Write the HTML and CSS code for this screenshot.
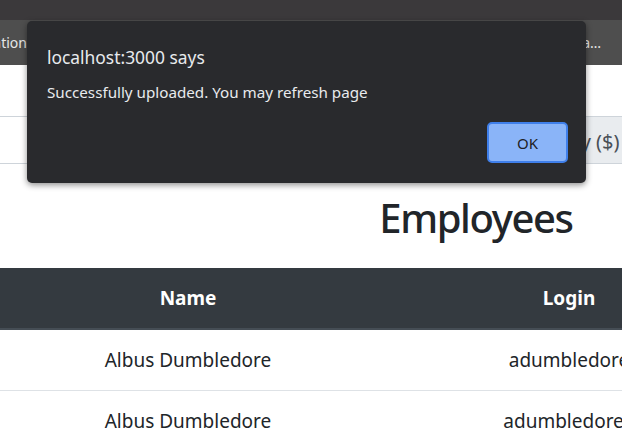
FILE: index.html
```html
<!DOCTYPE html>
<html lang="en">
<head>
<meta charset="utf-8">
<title>Employees</title>
<link rel="stylesheet" href="styles.css">
</head>
<body>
<div class="topband"></div>
<nav class="navbar">
  <div class="brand"><span>Employee Salary Application</span></div>
  <div class="spacer"></div>
  <div class="nav-link">Upload Data File</div>
</nav>
<main class="page">
  <div class="filters">
    <div class="field">
      <input class="form-control" type="text">
      <span class="group-text">Min Salary ($)</span>
    </div>
  </div>
  <h1 class="title">Employees</h1>
  <table class="table">
    <colgroup>
      <col class="c-name">
      <col class="c-login">
      <col class="c-salary">
    </colgroup>
    <thead>
      <tr><th>Name</th><th>Login</th><th>Salary</th></tr>
    </thead>
    <tbody>
      <tr><td>Albus Dumbledore</td><td>adumbledore</td><td>1000.00</td></tr>
      <tr><td>Albus Dumbledore</td><td>adumbledore2</td><td>1000.00</td></tr>
    </tbody>
  </table>
</main>

<div class="dialog" role="alertdialog">
  <div class="dialog-title">localhost:3000 says</div>
  <div class="dialog-msg">Successfully uploaded. You may refresh page</div>
  <div class="dialog-actions">
    <button class="ok-btn" type="button">OK</button>
  </div>
</div>
</body>
</html>
```

FILE: styles.css
```css
html, body {
  margin: 0;
  padding: 0;
}
body {
  width: 622px;
  height: 431px;
  overflow: hidden;
  position: relative;
  background: #ffffff;
  font-family: "Noto Sans", "Open Sans", sans-serif;
  color: #212529;
}
.topband {
  height: 20px;
  background: #3b393b;
}
.navbar {
  height: 45px;
  background: #4e4e4e;
  display: flex;
  align-items: center;
  color: #e6e6e6;
  font-size: 14px;
}
.brand {
  width: 27px;
  overflow: hidden;
  display: flex;
  justify-content: flex-end;
}
.brand span {
  white-space: nowrap;
  flex-shrink: 0;
}
.spacer { flex: 1; }
.nav-link {
  width: 84px;
  margin-right: 17px;
  white-space: nowrap;
  overflow: hidden;
  text-overflow: ellipsis;
}
.page {
  width: 952px;
}
.filters {
  padding-top: 51px;
}
.field {
  display: flex;
  height: 48px;
  width: 700px;
  box-sizing: border-box;
}
.form-control {
  flex: 0 0 476px;
  box-sizing: border-box;
  height: 48px;
  margin: 0;
  border: 1px solid #ced4da;
  border-left: 0;
  border-right: 0;
  background: #fff;
  font: inherit;
  font-size: 20px;
}
.group-text {
  flex: 1;
  box-sizing: border-box;
  height: 48px;
  display: flex;
  align-items: center;
  padding: 3px 16px 0;
  background: #e9ecef;
  border: 1px solid #ced4da;
  color: #495057;
  font-size: 20px;
  white-space: nowrap;
}
.title {
  margin: 30px 0 26px;
  text-align: center;
  font-size: 40px;
  font-weight: 500;
  line-height: 48px;
  letter-spacing: -1.4px;
}
.table {
  border-collapse: collapse;
  table-layout: fixed;
  width: 1148px;
  font-size: 19px;
}
.c-name { width: 376px; }
.c-login { width: 386px; }
.c-salary { width: 386px; }
.table th, .table td {
  padding: 15px;
  line-height: 30px;
  text-align: center;
  white-space: nowrap;
}
.table th {
  background: #343a40;
  color: #ffffff;
  font-weight: 700;
  border-bottom: 2px solid #454d55;
}
.table td {
  border-bottom: 1px solid #dee2e6;
  color: #212529;
}
.dialog {
  position: absolute;
  left: 27px;
  top: 21px;
  width: 559px;
  height: 162px;
  box-sizing: border-box;
  padding: 25px 18px 0 20px;
  background: #292a2d;
  border-radius: 5px;
  box-shadow: 0 2px 6px rgba(0, 0, 0, 0.45);
  color: #e8eaed;
}
.dialog-title {
  font-size: 17.4px;
  line-height: 22px;
}
.dialog-msg {
  margin-top: 14px;
  font-size: 15.2px;
  line-height: 20px;
}
.dialog-actions {
  display: flex;
  justify-content: flex-end;
  margin-top: 20px;
}
.ok-btn {
  width: 81px;
  height: 41px;
  box-sizing: border-box;
  border: 2px solid #3f7fea;
  border-radius: 5px;
  background: #8ab4f8;
  color: #202124;
  font-family: inherit;
  font-size: 15px;
  padding: 0;
}
```
